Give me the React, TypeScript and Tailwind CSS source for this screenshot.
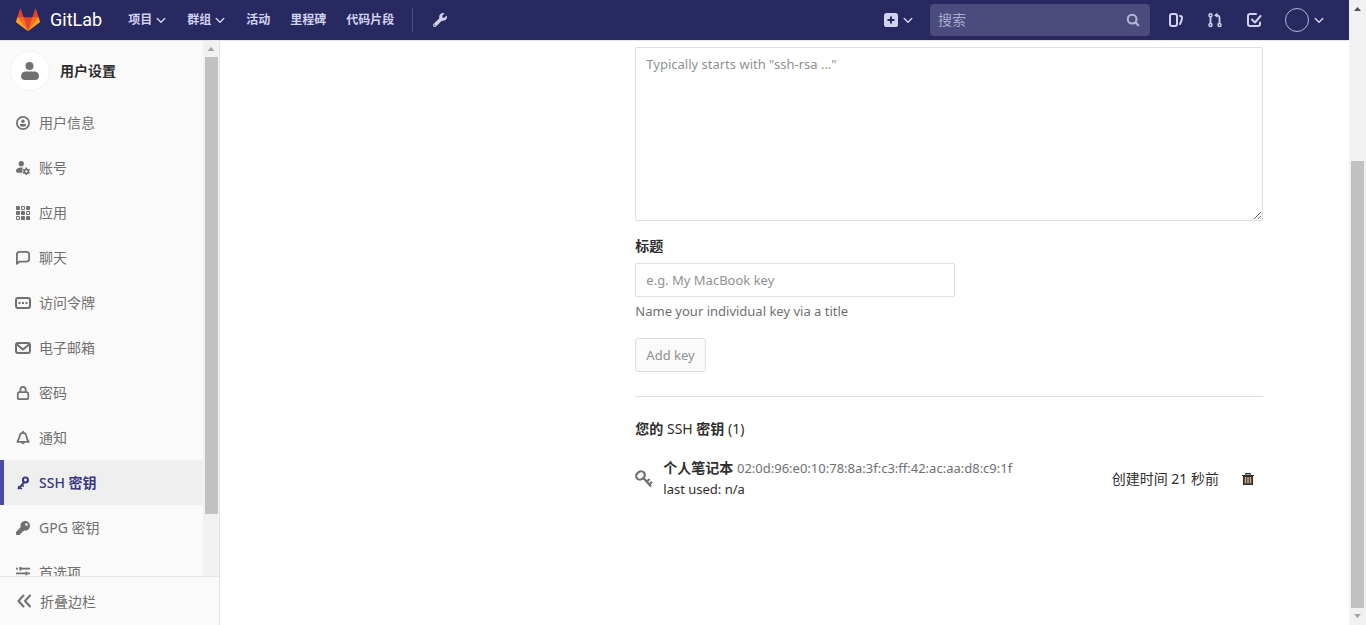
import type { ReactNode } from 'react';
import { FaWrench, FaKey } from 'react-icons/fa';

type IconProps = { className?: string; children?: ReactNode };

function Svg({ className = 'size-3.5', children }: IconProps) {
  return (
    <svg viewBox="0 0 16 16" fill="none" stroke="currentColor" strokeWidth="2" strokeLinecap="round" strokeLinejoin="round" className={`shrink-0 ${className}`} aria-hidden="true">
      {children}
    </svg>
  );
}

const Chevron = () => (
  <Svg className="size-3">
    <path d="M3 6l5 5 5-5" />
  </Svg>
);

const Tanuki = () => (
  <svg viewBox="0 0 36 36" className="size-6 shrink-0" aria-hidden="true">
    <path fill="#e24329" d="M2 14l9.38 9v-9l-4-12.28c-.205-.632-1.176-.632-1.38 0z" />
    <path fill="#e24329" d="M34 14l-9.38 9v-9l4-12.28c.205-.632 1.176-.632 1.38 0z" />
    <path fill="#e24329" d="M18 34.38L3 14h30z" />
    <path fill="#fc6d26" d="M18 34.38L11.38 14H2l4 11z" />
    <path fill="#fc6d26" d="M18 34.38L24.62 14H34l-4 11z" />
    <path fill="#fca326" d="M2 14L.1 20.16c-.18.565 0 1.2.5 1.56L18 34.38z" />
    <path fill="#fca326" d="M34 14l1.9 6.16c.18.565 0 1.2-.5 1.56L18 34.38z" />
  </svg>
);

const solid = { fill: 'currentColor', stroke: 'none' };

const ProfileIcon = () => (
  <Svg>
    <circle cx="8" cy="8" r="7" />
    <circle cx="8" cy="6" r="2" {...solid} />
    <path {...solid} d="M5.6 9h4.800c.8 0 1.300.6 1.300 1.300 0 1-1.700 1.900-3.700 1.900s-3.700-.9-3.700-1.900C4.300 9.600 4.800 9 5.600 9z" />
  </Svg>
);

const AccountIcon = () => (
  <Svg>
    <circle cx="6" cy="3" r="3" {...solid} />
    <path {...solid} d="M6 7.500c.8 0 1.500.1 2.100.3C7.200 9 7 10.500 7.200 11.800c.1.600.3 1.200.6 1.700H2c-1.200 0-2-.8-2-2 0-2.300 2.700-4 6-4z" />
    <circle cx="11.800" cy="11.800" r="2.300" />
    <path strokeLinecap="butt" strokeWidth="1.800" d="M11.800 7.500v1.500M11.800 14.500V16M8 9.700l1.400.8M14.200 13.100l1.400.8M8 13.900l1.400-.8M14.200 10.500l1.400-.8" />
  </Svg>
);

const cells = [1, 0, 1, 1, 1, 0, 0, 1, 1];
const AppsIcon = () => (
  <Svg>
    {cells.map((filled, i) => {
      const x = (i % 3) * 5.75;
      const y = Math.floor(i / 3) * 5.75;
      return filled ? (
        <rect key={i} x={x} y={y} width="4.500" height="4.500" rx="1" {...solid} />
      ) : (
        <rect key={i} x={x + 0.6} y={y + 0.6} width="3.300" height="3.300" rx=".5" strokeWidth="1.200" />
      );
    })}
  </Svg>
);

const ChatIcon = () => (
  <Svg>
    <path d="M1 14.700V4a3 3 0 0 1 3-3h8a3 3 0 0 1 3 3v5a3 3 0 0 1-3 3H4z" />
  </Svg>
);

const TokenIcon = () => (
  <Svg className="size-4">
    <rect x="1" y="3" width="14" height="10" rx="2" />
    <path {...solid} d="M3.500 7h2v2h-2zM7 7h2v2H7zM10.500 7h2v2h-2z" />
  </Svg>
);

const MailIcon = () => (
  <Svg className="size-4">
    <rect x="1" y="3" width="14" height="10" rx="2" />
    <path d="M2 4.500l6 5 6-5" />
  </Svg>
);

const LockIcon = () => (
  <Svg>
    <rect x="2" y="7" width="12" height="8" rx="2" />
    <path d="M5 7V4a3 3 0 0 1 6 0v3" />
  </Svg>
);

const BellIcon = () => (
  <Svg>
    <path d="M8 2C5.500 2 4.300 4 4.100 6.200 3.900 8.500 3 9.500 1.500 12.500h13C13 9.500 12.100 8.500 11.900 6.200 11.700 4 10.500 2 8 2z" />
    <path {...solid} d="M6 13h4a2 2 0 0 1-4 0zM7 0h2v2H7z" />
  </Svg>
);

const SshIcon = () => (
  <Svg>
    <circle cx="10.800" cy="4.600" r="2.900" strokeWidth="2.400" />
    <path strokeWidth="2.200" d="M9 7.500L3.300 14.200" />
    <path strokeWidth="1.800" d="M6.800 10.200l1.500 1.300M3 12.200l3.200 2.200M2.600 14h1.500" />
  </Svg>
);

const PreferencesIcon = () => (
  <Svg>
    <path strokeLinecap="butt" d="M0 3h2.200M4 3h12M0 8.500h11M13 8.500h3M0 14h2.200M4 14h12" />
    <path strokeLinecap="butt" strokeWidth="2.400" d="M5.200 1v4M11.800 6.500v4M5.200 12v4" />
  </Svg>
);

const items: { label: ReactNode; icon: ReactNode; active?: boolean }[] = [
  { label: '用户信息', icon: <ProfileIcon /> },
  { label: '账号', icon: <AccountIcon /> },
  { label: '应用', icon: <AppsIcon /> },
  { label: '聊天', icon: <ChatIcon /> },
  { label: '访问令牌', icon: <TokenIcon /> },
  { label: '电子邮箱', icon: <MailIcon /> },
  { label: '密码', icon: <LockIcon /> },
  { label: '通知', icon: <BellIcon /> },
  { label: <><span className="font-medium">SSH</span> 密钥</>, icon: <SshIcon />, active: true },
  { label: 'GPG 密钥', icon: <FaKey className="size-3.5" /> },
  { label: '首选项', icon: <PreferencesIcon /> },
];

function TopBar() {
  return (
    <header className="flex h-10 shrink-0 items-center bg-[#292961] pl-4 text-[#d1d1f0]">
      <a href="#home" className="flex items-center gap-2.5 text-white">
        <Tanuki />
        <span className="font-[Roboto,sans-serif] text-lg">GitLab</span>
      </a>
      <nav className="ml-[26px] flex items-center gap-5 text-xs font-bold">
        <button className="flex items-center gap-[3px]">项目<Chevron /></button>
        <button className="flex items-center gap-[3px]">群组<Chevron /></button>
        <a href="#activity">活动</a>
        <a href="#milestones">里程碑</a>
        <a href="#snippets">代码片段</a>
      </nav>
      <span className="ml-[18px] h-6 w-px bg-[#4b4b7e]" />
      <a href="#admin" aria-label="Admin" className="ml-5"><FaWrench className="size-3.5" /></a>
      <div className="ml-auto flex items-center">
        <button aria-label="New" className="mr-4 flex items-center gap-1">
          <svg viewBox="0 0 16 16" className="size-3.5" aria-hidden="true">
            <rect width="16" height="16" rx="3" fill="currentColor" />
            <path d="M8 4v8M4 8h8" stroke="#292961" strokeWidth="2.200" />
          </svg>
          <Chevron />
        </button>
        <label className="flex h-8 w-[220px] items-center rounded bg-[#4b4b7e] pr-2.5 pl-2">
          <input aria-label="搜索" placeholder="搜索" className="min-w-0 flex-1 bg-transparent text-sm outline-none placeholder:text-[#a9a9cc]" />
          <Svg className="size-3.5 text-[#b5b5da]">
            <circle cx="7" cy="7" r="5" strokeWidth="2.400" />
            <path strokeWidth="2.600" d="M11 11l3 3" />
          </Svg>
        </label>
        <a href="#issues" aria-label="Issues" className="ml-[18px]">
          <Svg className="size-4">
            <rect x="2" y="2" width="7" height="12" rx="2" />
            <path d="M12 4c1.500 0 2 .4 2 1.500 0 2-.5 4-2 6.500" />
          </Svg>
        </a>
        <a href="#merge" aria-label="Merge requests" className="ml-[23px]">
          <Svg className="size-4">
            <g strokeWidth="1.500">
              <circle cx="3.500" cy="3.200" r="1.500" />
              <circle cx="3.500" cy="13" r="1.500" />
              <circle cx="12.500" cy="13" r="1.500" />
            </g>
            <path strokeWidth="1.800" d="M3.500 5v6M12.500 11V6c0-1.700-.8-2.700-2.500-2.700" />
            <path {...solid} d="M10.500.8v5L7 3.300z" />
          </Svg>
        </a>
        <a href="#todos" aria-label="Todos" className="ml-[23px]">
          <Svg className="size-4">
            <path d="M10 2H4a2 2 0 0 0-2 2v8a2 2 0 0 0 2 2h8a2 2 0 0 0 2-2v-1.500" />
            <path d="M6 7.500l3 3L14.500 4" />
          </Svg>
        </a>
        <button aria-label="Account" className="mr-6 ml-[23px] flex items-center gap-1">
          <span className="size-6 rounded-full border border-[#b5b5da]" />
          <Chevron />
        </button>
      </div>
    </header>
  );
}

function Sidebar() {
  return (
    <aside className="flex w-[220px] shrink-0 flex-col border-r border-[#e5e5e5] bg-[#fafafa] text-[#707070]">
      <div className="flex min-h-0 flex-1">
        <div className="min-w-0 flex-1 overflow-hidden">
          <a href="#settings" className="flex h-[59px] items-center gap-2.5 pl-2.5 font-bold text-[#2e2e2e]">
            <span className="flex size-10 items-center justify-center rounded-full border border-[#f2f2f2] bg-white text-[#707070]">
              <svg viewBox="0 0 18 18" className="size-[18px]" fill="currentColor" aria-hidden="true">
                <circle cx="8.500" cy="4" r="4" />
                <path d="M5 9.500h8c3 0 5 2 5 4.500 0 2.600-1.500 4-4 4H4c-2.500 0-4-1.400-4-4 0-2.500 2-4.500 5-4.500z" />
              </svg>
            </span>
            用户设置
          </a>
          <ul>
            {items.map((item, i) => (
              <li key={i}>
                <a
                  href="#nav"
                  className={
                    item.active
                      ? 'flex h-[45px] items-center gap-2 border-l-4 border-[#4b4ba3] bg-[#efefef] pl-[11px] font-bold text-[#393982]'
                      : 'flex h-[45px] items-center gap-2 pl-[15px]'
                  }
                >
                  <span className="flex w-4 justify-center">{item.icon}</span>
                  <span>{item.label}</span>
                </a>
              </li>
            ))}
          </ul>
        </div>
        <div className="flex w-4 shrink-0 flex-col items-center bg-[#f1f1f1]" aria-hidden="true">
          <svg viewBox="0 0 16 16" className="size-4 shrink-0"><path fill="#a3a3a3" d="M4.500 10h7L8 6z" /></svg>
          <div className="h-[457px] w-[13px] bg-[#c1c1c1]" />
        </div>
      </div>
      <button className="flex h-[49px] shrink-0 items-center gap-2 border-t border-[#e5e5e5] pl-4">
        <Svg className="size-4"><path d="M7.500 2.500L2.500 8l5 5.500M14 2.500L9 8l5 5.500" /></Svg>
        折叠边栏
      </button>
    </aside>
  );
}

function KeyForm() {
  return (
    <form onSubmit={(e) => e.preventDefault()}>
      <textarea
        aria-label="Key"
        placeholder={'Typically starts with "ssh-rsa …"'}
        className="block h-[174px] w-full rounded-xs border border-[#dfdfdf] px-2.5 py-1.5 text-[13px] leading-5 placeholder:text-[#919191]"
      />
      <label htmlFor="title" className="mt-3.5 block font-bold">标题</label>
      <input
        id="title"
        placeholder="e.g. My MacBook key"
        className="mt-[7px] block h-[34px] w-80 rounded-xs border border-[#dfdfdf] px-2.5 text-[13px] placeholder:text-[#919191]"
      />
      <p className="mt-1 text-[13px] text-[#707070]">Name your individual key via a title</p>
      <button disabled className="mt-4 h-[34px] rounded-[3px] border border-[#dfdfdf] bg-[#fafafa] px-2.5 text-[13px] text-[#919191]">
        Add key
      </button>
    </form>
  );
}

function KeyList() {
  return (
    <section className="mt-6 border-t border-[#dfdfdf] pt-[21px]">
      <h5 className="font-bold">您的 <span className="font-normal">SSH</span> 密钥 <span className="font-normal">(1)</span></h5>
      <div className="mt-[18px] flex items-center">
        <svg viewBox="0 0 18 18" className="size-[18px] shrink-0 text-[#707070]" fill="none" stroke="currentColor" aria-hidden="true">
          <ellipse cx="5.500" cy="5.500" rx="4.500" ry="3.800" strokeWidth="2.200" transform="rotate(-35 5.500 5.500)" />
          <path strokeWidth="2.200" d="M8.500 8l7.500 8.500M11.500 12l3-3M14 14.800l3-3" />
        </svg>
        <div className="ml-2.5">
          <p><a href="#key" className="font-bold">个人笔记本</a> <span className="text-[13px] text-[#707070]">02:0d:96:e0:10:78:8a:3f:c3:ff:42:ac:aa:d8:c9:1f</span></p>
          <p className="text-[13px]">last used: n/a</p>
        </div>
        <span className="ml-auto">创建时间 21 秒前</span>
        <button aria-label="Remove" className="mr-[9px] ml-[23px]">
          <svg viewBox="0 0 12 12" className="block size-3" aria-hidden="true">
            <path d="M4 2V.7h4V2M0 2.500h12" fill="none" stroke="#2e2e2e" strokeWidth="1.200" />
            <path d="M1 3h10v9H1z" fill="#2e2e2e" />
            <path d="M3.500 4v6.500M8.500 4v6.500" stroke="#e8a765" strokeWidth="1.500" />
            <path d="M6 4v6.500" stroke="#a9b6d0" strokeWidth="1.500" />
          </svg>
        </button>
      </div>
    </section>
  );
}

export default function App() {
  return (
    <div className="flex h-screen bg-white font-['Noto_Sans','Noto_Sans_CJK_SC',sans-serif] text-sm leading-[21px] text-[#2e2e2e]">
      <div className="flex min-w-0 flex-1 flex-col">
        <TopBar />
        <div className="flex min-h-0 flex-1 border-t border-[#e5e5e5]">
          <Sidebar />
          <main className="min-w-0 flex-1 overflow-hidden">
            <div className="mx-auto flex max-w-[991px] pt-1.5">
              <div className="w-1/3" />
              <div className="w-2/3 pr-[17px] pl-4">
                <KeyForm />
                <KeyList />
              </div>
            </div>
          </main>
        </div>
      </div>
      <div className="flex w-[17px] shrink-0 flex-col items-center bg-[#f1f1f1]" aria-hidden="true">
        <svg viewBox="0 0 17 17" className="size-[17px] shrink-0"><path fill="#505050" d="M5 11h7L8.500 7z" /></svg>
        <div className="flex w-[13px] flex-1 flex-col justify-end">
          <div className="h-[447px] w-full bg-[#c1c1c1]" />
        </div>
        <svg viewBox="0 0 17 17" className="size-[17px] shrink-0"><path fill="#a3a3a3" d="M5 6h7l-3.500 4z" /></svg>
      </div>
    </div>
  );
}
